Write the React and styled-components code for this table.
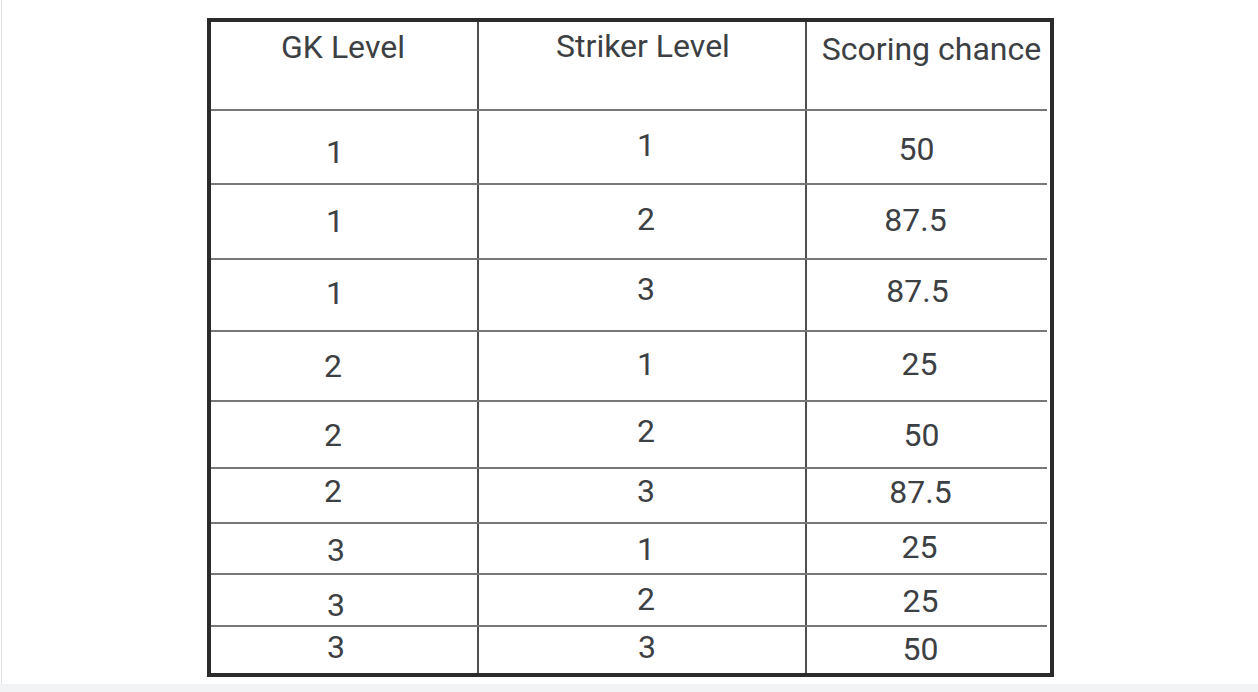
import React from "react";
import styled, { createGlobalStyle } from "styled-components";

const GlobalStyle = createGlobalStyle`
  html, body {
    margin: 0;
    padding: 0;
    background: #f1f3f4;
  }
  body {
    font-family: Roboto, "Noto Sans", "Liberation Sans", sans-serif;
  }
`;

const Viewport = styled.div`
  height: 684px;
  background: #ffffff;
  padding-left: 1px;
  box-sizing: border-box;
`;

const Panel = styled.div`
  height: 100%;
  border-left: 1px solid #e0e0e0;
  box-sizing: border-box;
  padding: 18px 0 0 205px;
`;

const Table = styled.div`
  width: 847px;
  height: 659px;
  box-sizing: border-box;
  border: 4px solid #2b2b2b;
  display: flex;
  flex-direction: column;
  background: #ffffff;
`;

const Row = styled.div`
  display: grid;
  grid-template-columns: 266px 328px 1fr;
  height: ${(p) => p.$h}px;
  flex: 0 0 auto;
  margin-right: 3px;
  border-bottom: ${(p) => (p.$last ? "none" : "2px solid #787878")};
  box-sizing: content-box;
`;

const Cell = styled.div`
  display: flex;
  justify-content: center;
  align-items: flex-start;
  box-sizing: border-box;
  border-left: ${(p) => (p.$first ? "none" : "2px solid #4d4d4d")};
  margin-right: ${(p) => (p.$col === 2 ? "-3px" : "0")};
  padding-top: ${(p) => p.$dy}px;
  padding-left: ${(p) => Math.max(0, p.$dx * 2)}px;
  padding-right: ${(p) => Math.max(0, -p.$dx * 2)}px;
  min-width: 0;
`;

const Text = styled.span`
  font-size: 32px;
  line-height: 32px;
  font-weight: 400;
  color: #3c4043;
  white-space: nowrap;
`;

const header = {
  h: 87,
  cells: [
    ["GK Level", -1, 9],
    ["Striker Level", 1, 8],
    ["Scoring chance", 3, 11],
  ],
};

const rows = [
  { h: 72, cells: [["1", -9, 25], ["1", 4, 18], ["50", -12, 22]] },
  { h: 73, cells: [["1", -9, 20], ["2", 4, 18], ["87.5", -13, 19]] },
  { h: 70, cells: [["1", -9, 17], ["3", 4, 13], ["87.5", -11, 15]] },
  { h: 68, cells: [["2", -11, 18], ["1", 4, 16], ["25", -9, 16]] },
  { h: 65, cells: [["2", -11, 17], ["2", 4, 13], ["50", -7, 17]] },
  { h: 53, cells: [["2", -11, 6], ["3", 4, 6], ["87.5", -8, 7]] },
  { h: 49, cells: [["3", -8, 10], ["1", 4, 9], ["25", -9, 7]] },
  { h: 50, cells: [["3", -8, 14], ["2", 4, 8], ["25", -8, 10]] },
  { h: 46, cells: [["3", -8, 4], ["3", 5, 4], ["50", -8, 6]] },
];

function TableRow({ row, last }) {
  return (
    <Row $h={row.h} $last={last}>
      {row.cells.map(([text, dx, dy], i) => (
        <Cell key={i} $first={i === 0} $col={i} $dx={dx} $dy={dy}>
          <Text>{text}</Text>
        </Cell>
      ))}
    </Row>
  );
}

export default function App() {
  return (
    <>
      <GlobalStyle />
      <Viewport>
        <Panel>
          <Table>
            <TableRow row={header} />
            {rows.map((r, i) => (
              <TableRow key={i} row={r} last={i === rows.length - 1} />
            ))}
          </Table>
        </Panel>
      </Viewport>
    </>
  );
}
